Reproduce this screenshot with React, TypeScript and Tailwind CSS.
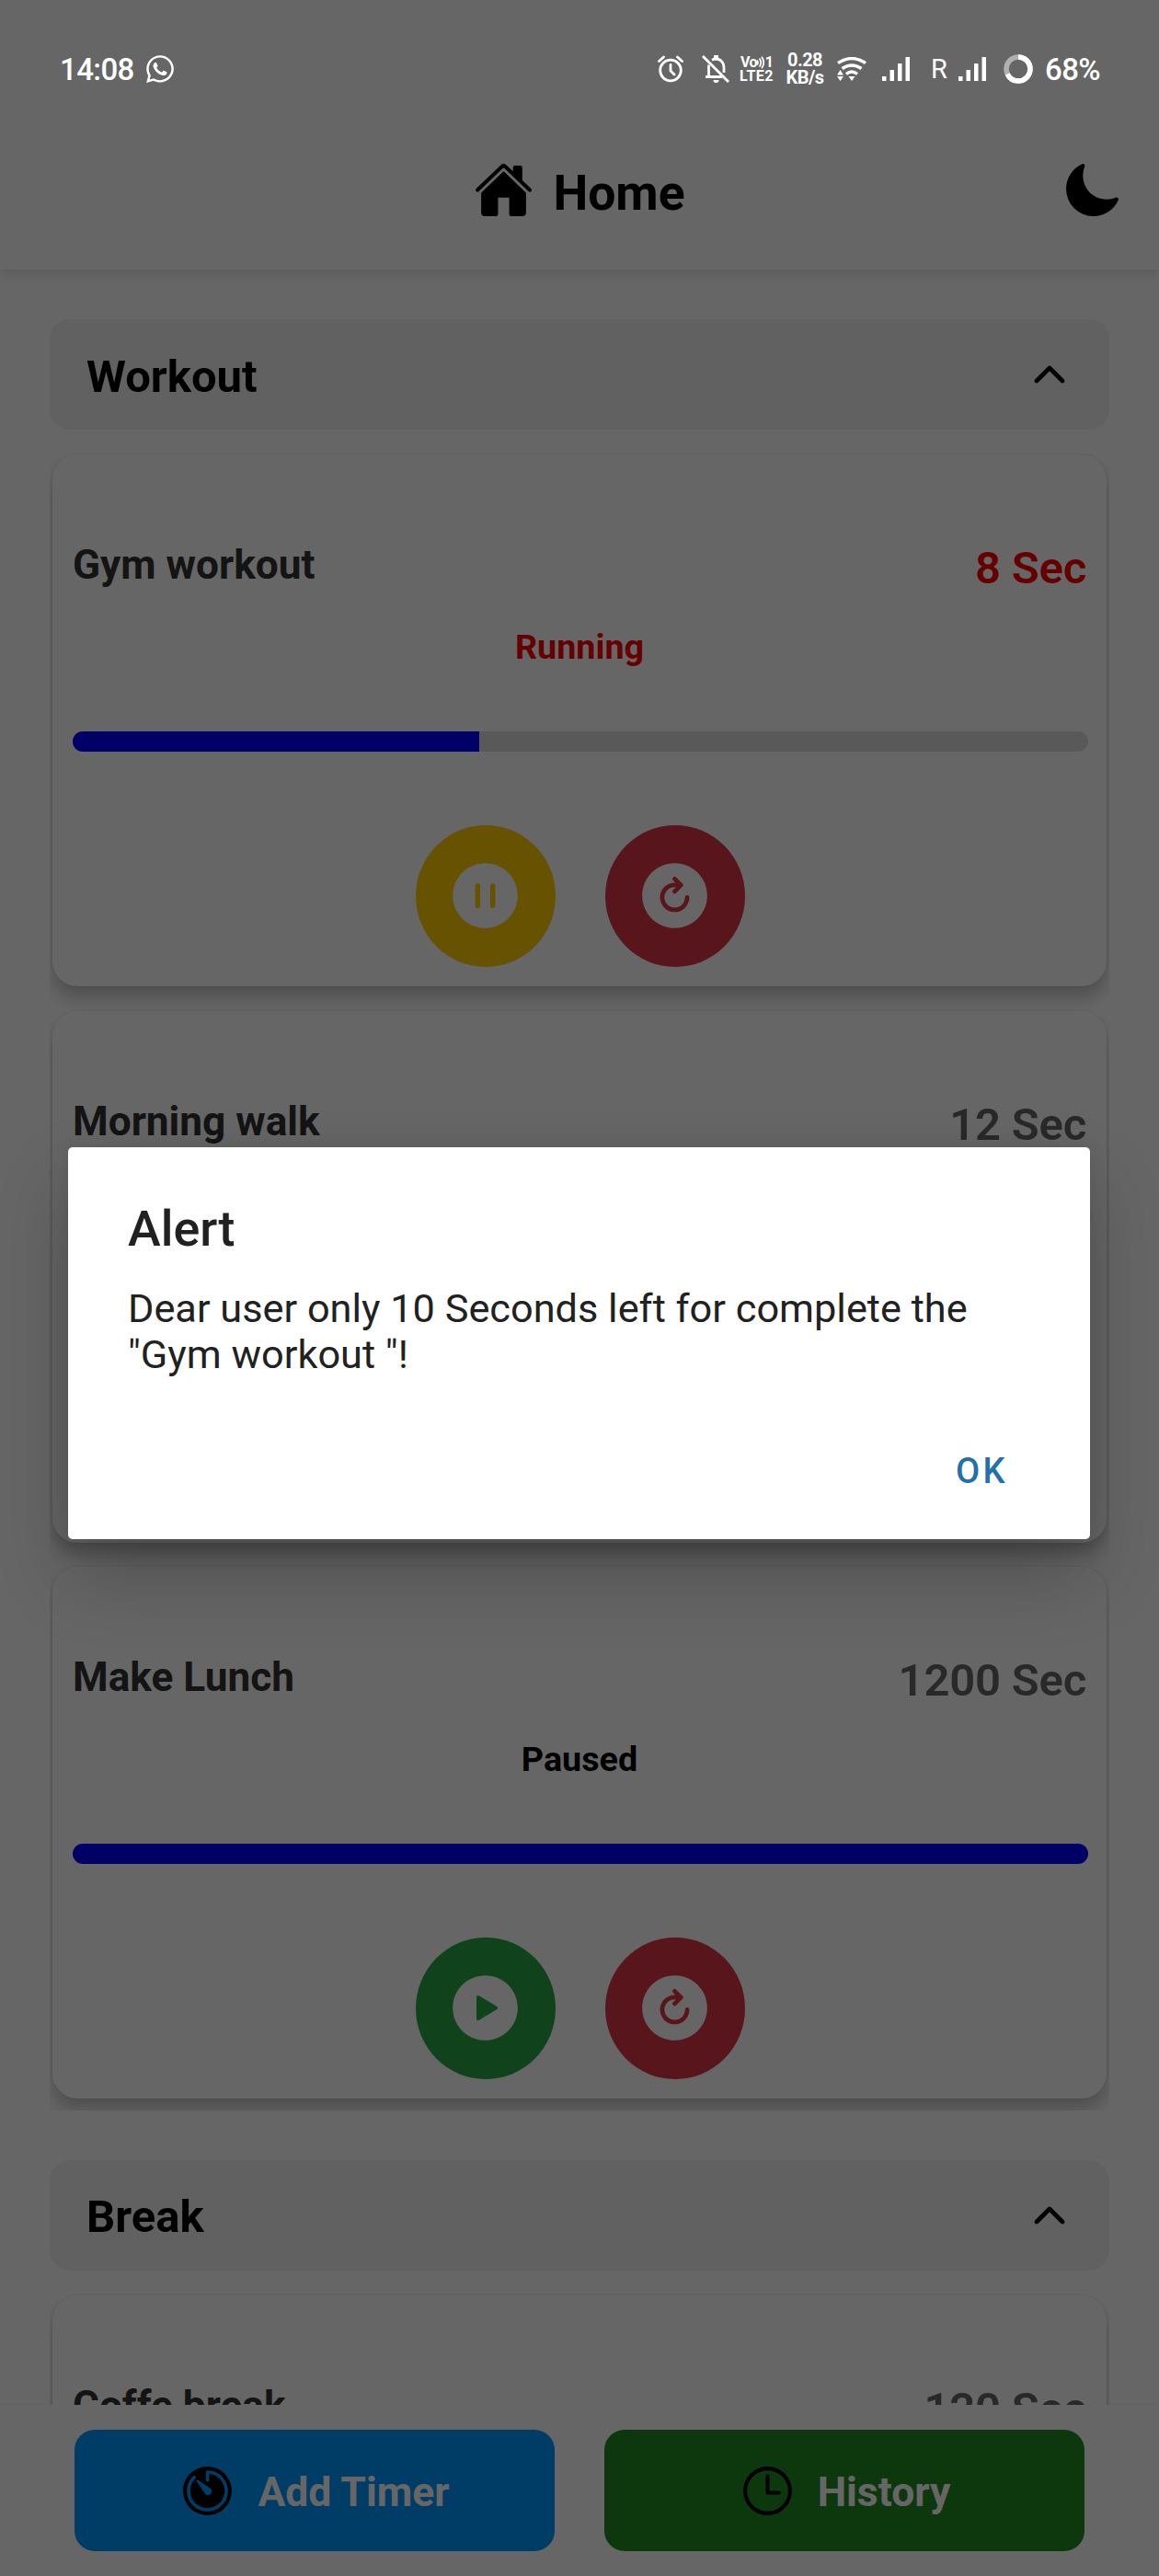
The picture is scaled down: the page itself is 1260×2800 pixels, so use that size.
import type { ReactNode } from "react";
import {
  IoChevronUp,
  IoHome,
  IoMoon,
  IoPauseCircle,
  IoPlayCircle,
  IoRefreshCircle,
  IoTimeOutline,
  IoTimer,
} from "react-icons/io5";
import { FaWhatsapp } from "react-icons/fa";

type Timer = {
  name: string;
  seconds: number;
  status: string;
  progress: number;
  running?: boolean;
};

const workout: Timer[] = [
  { name: "Gym workout", seconds: 8, status: "Running", progress: 40, running: true },
  { name: "Morning walk", seconds: 12, status: "Paused", progress: 100 },
  { name: "Make Lunch", seconds: 1200, status: "Paused", progress: 100 },
];

const breaks: Timer[] = [{ name: "Coffe break", seconds: 120, status: "Paused", progress: 100 }];

function Signal({ className }: { className: string }) {
  return (
    <svg viewBox="0 0 30 26" className={"h-[26px] w-[30px] shrink-0 " + className} fill="white">
      <rect x="0" y="21" width="4.5" height="5" />
      <rect x="8.5" y="14" width="4.5" height="12" />
      <rect x="17" y="7" width="4.5" height="19" />
      <rect x="25.5" y="0" width="4.5" height="26" />
    </svg>
  );
}

function StatusBar() {
  return (
    <div className="absolute inset-x-0 top-0 z-30 flex h-[150px] items-center pr-[64px] pl-[65px] text-white">
      <span className="w-[80px] text-[33px] leading-none font-medium tracking-[-0.6px] whitespace-nowrap">14:08</span>
      <FaWhatsapp className="ml-[12px] size-[34px]" />
      <div className="ml-auto flex items-center">
        <svg viewBox="0 0 28 30" className="h-[30px] w-[28px]" fill="none" stroke="white" strokeWidth="2.8" strokeLinecap="round">
          <circle cx="14" cy="16.5" r="11.3" />
          <path d="M14 10.5v6.5l4 4M1.5 6.5l5-4.5M26.5 6.5l-5-4.5" />
        </svg>
        <svg viewBox="0 0 30 30" className="ml-[20px] h-[30px] w-[30px]" fill="none" stroke="white" strokeWidth="2.8">
          <path d="M1 1l28 28" />
          <path d="M11 5.200a8.500 8.500 0 0 1 4-1.200c5.500 0 9 4.300 9 9V19" />
          <path d="M7.500 10.500V23M4 23.500h18" />
          <path d="M15.500 0v4" strokeWidth="5" />
          <path d="M12.500 27h6a3 3 0 0 1-6 0z" fill="white" stroke="none" />
        </svg>
        <div className="ml-[11px] flex w-[37px] flex-col text-[16px] leading-[14px] font-bold">
          <span className="flex items-center pl-[1px]">
            <span className="w-[17px] tracking-[-0.5px]">Vo</span>
            <svg viewBox="0 0 9 14" className="h-[14px] w-[9px]" fill="none" stroke="white" strokeWidth="1.7">
              <path d="M1 4.500q2 2.500 0 5M3.500 2.500q3.500 4.500 0 9M6 .8q4.500 6.200 0 12.400" />
            </svg>
            <span className="ml-auto">1</span>
          </span>
          <span className="pt-[1px] tracking-[0.5px]">LTE2</span>
        </div>
        <div className="ml-[14px] flex w-[40px] flex-col items-center text-[20px] leading-[19px] font-bold tracking-[-0.6px]">
          <span>0.28</span>
          <span>KB/s</span>
        </div>
        <svg viewBox="0 0 32 27" className="ml-[15px] h-[27px] w-[32px]" fill="none" stroke="white" strokeWidth="3.4">
          <path d="M1 6.500Q16-3.500 31 6.500" />
          <path d="M5.500 12.500Q16 5.500 26.500 12.500" />
          <path d="M10 18.500Q16 13.500 22 18.500" />
          <path d="M12.500 21h7L16 26zM0 21h7l-3.500 5zM0 19.500h7L3.500 14z" fill="white" stroke="none" />
        </svg>
        <Signal className="ml-[17px]" />
        <span className="ml-[23px] w-[18px] text-[29px] leading-none font-normal">R</span>
        <Signal className="ml-[12px]" />
        <svg viewBox="0 0 32 32" className="ml-[19px] h-[32px] w-[32px] -rotate-90" fill="none" strokeWidth="5.500">
          <circle cx="16" cy="16" r="13" stroke="#b0b0b0" />
          <circle cx="16" cy="16" r="13" stroke="white" pathLength="100" strokeDasharray="68 32" />
        </svg>
        <span className="ml-[13px] w-[60px] text-[33px] leading-none font-medium tracking-[-0.6px] whitespace-nowrap">68%</span>
      </div>
    </div>
  );
}

function RoundButton({ color, children }: { color: string; children: ReactNode }) {
  return (
    <button className={"flex h-[154px] w-[152px] items-center justify-center rounded-[50%] pr-[2px] pb-[2px] text-white " + color}>
      {children}
    </button>
  );
}

function TimerCard({ timer }: { timer: Timer }) {
  return (
    <article className="relative mx-[3px] h-[578px] shrink-0 rounded-[27px] bg-white px-[22px] pt-[94px] shadow-[0_0_3px_rgba(0,0,0,0.1),0_13px_18px_rgba(0,0,0,0.22)]">
      <div className="flex items-start justify-between">
        <h3 className="text-[44.200px] leading-[52px] font-bold text-[#333]">{timer.name}</h3>
        <span className={"pt-[1px] text-[49px] leading-[58px] font-semibold tracking-[-0.2px] " + (timer.running ? "text-[#f00]" : "text-[#666]")}>
          {timer.seconds} Sec
        </span>
      </div>
      <p className={"mt-[33px] text-center text-[37.700px] leading-[46px] font-bold " + (timer.running ? "text-[#f00]" : "text-black")}>
        {timer.status}
      </p>
      <div className="mt-[69px] -mr-[2px] h-[22px] overflow-hidden rounded-[11px] bg-[#dedede]">
        <div className="h-full bg-[#00f]" style={{ width: timer.progress + "%" }} />
      </div>
      <div className="mt-[80px] flex justify-center gap-[54px] pl-[2px]">
        <RoundButton color={timer.running ? "bg-[#ffcc00]" : "bg-[#28a745]"}>
          {timer.running ? <IoPauseCircle className="size-[87px]" /> : <IoPlayCircle className="size-[87px]" />}
        </RoundButton>
        <RoundButton color="bg-[#dc3545]">
          <IoRefreshCircle className="size-[87px]" />
        </RoundButton>
      </div>
    </article>
  );
}

function Section({ title, timers }: { title: string; timers: Timer[] }) {
  return (
    <section className="flex shrink-0 flex-col">
      <div className="flex h-[120px] items-center justify-between rounded-[22px] bg-[#f2f2f2] pr-[40px] pl-[40px]">
        <h2 className="pt-[5px] text-[49px] leading-[58px] font-bold">{title}</h2>
        <IoChevronUp className="size-[50px]" />
      </div>
      <div className="flex flex-col gap-[26.500px] overflow-hidden pt-[27px] pb-[13px]">
        {timers.map((t) => (
          <TimerCard key={t.name} timer={t} />
        ))}
      </div>
    </section>
  );
}

function AlertDialog() {
  return (
    <div className="absolute inset-0 z-20 flex flex-col bg-black/60 pt-[1247px] pl-[74px]">
      <div
        role="alertdialog"
        className="flex h-[426px] w-[1111px] flex-col rounded-[5px] bg-white pr-[89px] pl-[65px] text-[#212121] shadow-[0_0_20px_rgba(0,0,0,0.08),0_40px_80px_rgba(0,0,0,0.22)]"
      >
        <h2 className="mt-[57px] text-[53.800px] leading-[64px] font-medium">Alert</h2>
        <p className="mt-[30px] text-[43.300px] leading-[50px]">
          Dear user only 10 Seconds left for complete the
          <br />
          "Gym workout "!
        </p>
        <button className="mt-[78px] self-end text-[38px] leading-[46px] font-medium tracking-[3.400px] text-[#2370aa]">OK</button>
      </div>
    </div>
  );
}

export default function App() {
  return (
    <div className="relative flex h-[2800px] w-[1260px] flex-col overflow-hidden bg-white font-[Roboto,sans-serif] text-black">
      <header className="relative z-10 grid h-[293px] shrink-0 grid-cols-[1fr_auto_1fr] items-center bg-white pt-[150px] pr-[40px] pb-[30px] pl-[40px] shadow-[0_4px_14px_rgba(0,0,0,0.12)]">
        <div />
        <div className="flex items-center gap-[21px]">
          <IoHome className="size-[65px]" />
          <h1 className="pt-[6px] text-[53.500px] leading-[62px] font-bold">Home</h1>
        </div>
        <IoMoon className="size-[65px] justify-self-end" />
      </header>

      <main className="flex h-[2321px] shrink-0 flex-col gap-[53.500px] overflow-hidden px-[54px] pt-[54px]">
        <Section title="Workout" timers={workout} />
        <Section title="Break" timers={breaks} />
      </main>

      <nav className="flex h-[186px] shrink-0 items-start gap-[54px] bg-white px-[81px] pt-[27px] text-[44.500px] font-bold text-white shadow-[0_0_2px_rgba(0,0,0,0.12)]">
        <button className="flex h-[132px] w-[522px] items-center justify-center gap-[22px] rounded-[22px] bg-[#0099ff] pr-[2px]">
          <IoTimer className="size-[65px] text-black" />
          <span className="pt-[3px] leading-[52px]">Add Timer</span>
        </button>
        <button className="flex h-[132px] w-[522px] items-center justify-center gap-[22px] rounded-[22px] bg-[#228b22] pr-[1px]">
          <IoTimeOutline className="size-[65px] text-black" />
          <span className="pt-[3px] leading-[52px]">History</span>
        </button>
      </nav>

      <AlertDialog />
      <StatusBar />
    </div>
  );
}
